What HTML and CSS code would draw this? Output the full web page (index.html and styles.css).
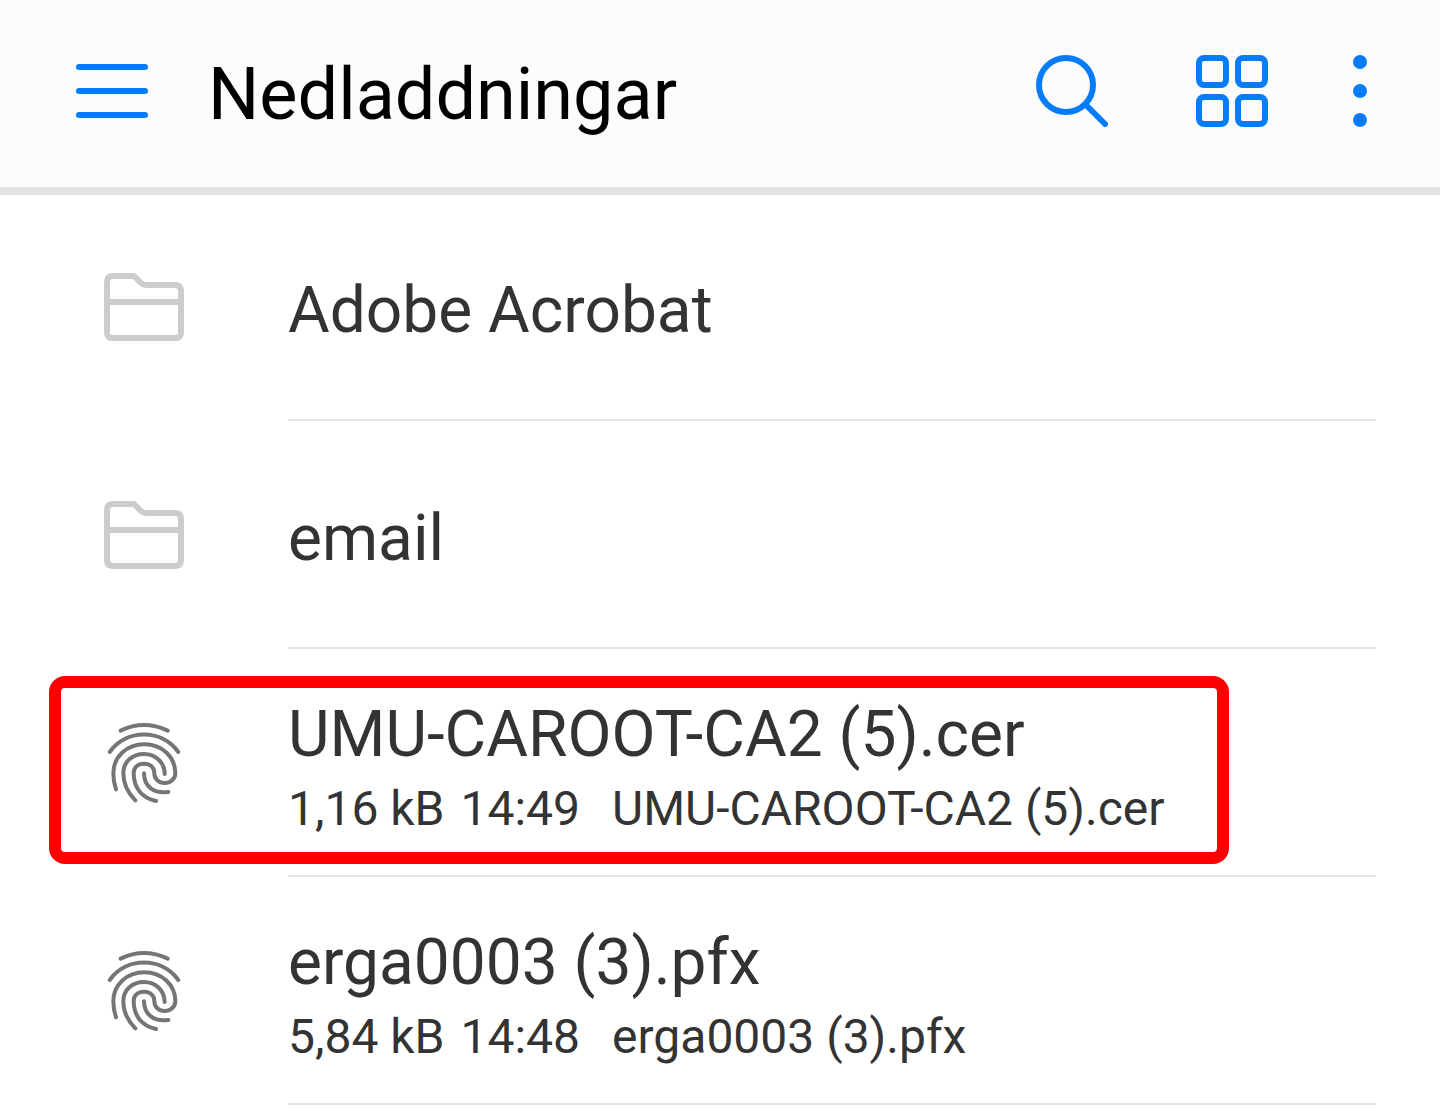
FILE: index.html
```html
<!doctype html>
<html lang="sv">
<head>
  <meta charset="utf-8">
  <meta name="viewport" content="width=device-width, initial-scale=1">
  <title>Nedladdningar</title>
  <link rel="stylesheet" href="styles.css">
</head>
<body>

  <!-- shared file icons -->
  <svg class="symbols" width="0" height="0" aria-hidden="true">
    <symbol id="folder" viewBox="0 0 80 70">
      <path d="M3 31V11Q3 5 9 5H30L37 12Q39 14 42 14H71Q77 14 77 20V61Q77 67 71 67H9Q3 67 3 61V31H77"/>
    </symbol>
    <symbol id="fingerprint" viewBox="30 30 240 255">
      <path d="M80 62Q150 28 221 62"/>
      <path d="M47 126C98 56 202 56 253 126"/>
      <path d="M66 238C60 220 58 207 58 190C58 140 99 103 151 103C203 103 244 140 244 190C244 207 229 219 212 219C194 219 181 207 181 190C181 172 168 161 150 161C132 161 119 172 119 190C119 235 145 264 186 273"/>
      <path d="M124 271C98 245 88 220 88 190C88 155 115 132 150 132C185 132 212 158 212 192"/>
      <path d="M150 190C150 230 180 252 223 246"/>
    </symbol>
  </svg>

  <header class="topbar">
    <button class="menu" type="button" aria-label="Meny">
      <svg width="72" height="72" viewBox="0 0 72 72"><path d="M3 12H69M3 36H69M3 60H69"/></svg>
    </button>
    <h1>Nedladdningar</h1>
    <div class="actions">
      <button class="action" type="button" aria-label="Sök">
        <svg width="72" height="72" viewBox="0 0 72 72"><circle cx="30" cy="30" r="27"/><path d="M50 50L69 69"/></svg>
      </button>
      <button class="action" type="button" aria-label="Rutnät">
        <svg width="72" height="72" viewBox="0 0 72 72">
          <rect x="3" y="3" width="27" height="27" rx="5"/>
          <rect x="42" y="3" width="27" height="27" rx="5"/>
          <rect x="3" y="42" width="27" height="27" rx="5"/>
          <rect x="42" y="42" width="27" height="27" rx="5"/>
        </svg>
      </button>
      <button class="more" type="button" aria-label="Mer">
        <svg width="16" height="72" viewBox="0 0 16 72"><circle cx="8" cy="7" r="7"/><circle cx="8" cy="36" r="7"/><circle cx="8" cy="65" r="7"/></svg>
      </button>
    </div>
  </header>

  <main>
    <ul class="files">
      <li>
        <a class="file" href="#">
          <svg class="icon folder" width="80" height="70"><use href="#folder"/></svg>
          <div class="info"><div class="name">Adobe Acrobat</div></div>
        </a>
      </li>
      <li>
        <a class="file" href="#">
          <svg class="icon folder" width="80" height="70"><use href="#folder"/></svg>
          <div class="info"><div class="name">email</div></div>
        </a>
      </li>
      <li>
        <a class="file marked" href="#">
          <svg class="icon print" width="80" height="85"><use href="#fingerprint"/></svg>
          <div class="info">
            <div class="name">UMU-CAROOT-CA2 (5).cer</div>
            <div class="meta"><span class="size">1,16 kB</span><span class="time">14:49</span><span>UMU-CAROOT-CA2 (5).cer</span></div>
          </div>
        </a>
      </li>
      <li>
        <a class="file" href="#">
          <svg class="icon print" width="80" height="85"><use href="#fingerprint"/></svg>
          <div class="info">
            <div class="name">erga0003 (3).pfx</div>
            <div class="meta"><span class="size">5,84 kB</span><span class="time">14:48</span><span>erga0003 (3).pfx</span></div>
          </div>
        </a>
      </li>
    </ul>
  </main>

</body>
</html>
```
FILE: styles.css
```css
* {
    box-sizing: border-box;
}
body {
    margin: 0;
    background: #fff;
    color: #333;
    font-family: Roboto, sans-serif;
}
.symbols {
    position: absolute;
}
svg {
    display: block;
    fill: none;
    stroke-linecap: round;
    stroke-linejoin: round;
}

/* top bar */
.topbar {
    position: relative;
    display: flex;
    align-items: center;
    min-height: 187px;
    padding: 0 72px 5px 76px;
    background: #fcfcfc;
    box-shadow: 0 8px 0 #e1e1e1;
}
h1 {
    flex: 1;
    margin: 0;
    padding: 8px 0 0 60px;
    color: #000;
    font-size: 72px;
    font-weight: 400;
    line-height: 84px;
}
button {
    padding: 0;
    border: 0;
    background: none;
    cursor: pointer;
}
button svg {
    stroke: #067df7;
    stroke-width: 6px;
}
.actions {
    display: flex;
    gap: 80px;
}
.action {
    padding: 0 4px;
}
.more svg {
    fill: #067df7;
    stroke: none;
}

/* file list */
.files {
    margin: 6px 0 0;
    padding: 0;
    list-style: none;
}
.file {
    position: relative;
    display: flex;
    align-items: center;
    gap: 104px;
    padding: 0 64px 0 104px;
    color: inherit;
    text-decoration: none;
}
.icon {
    flex: none;
    margin-bottom: 2px;
}
.folder {
    stroke: #ccc;
    stroke-width: 6px;
}
.print {
    stroke: #757575;
    stroke-width: 12px;
}
.info {
    flex: 1;
    display: flex;
    flex-direction: column;
    justify-content: center;
    gap: 8px;
    min-height: 228px;
    padding-top: 9px;
    border-bottom: 2px solid #e5e5e5;
    white-space: nowrap;
}
.name {
    font-size: 64px;
    line-height: 76px;
}
.meta {
    display: flex;
    font-size: 48px;
    line-height: 56px;
}
.size {
    margin-right: 16px;
}
.time {
    margin-right: 32px;
}
/* red frame around the certificate */
.marked::after {
    content: "";
    position: absolute;
    top: 27px;
    right: 211px;
    bottom: 13px;
    left: 49px;
    border: 12px solid #f00;
    border-radius: 16px;
}
```
